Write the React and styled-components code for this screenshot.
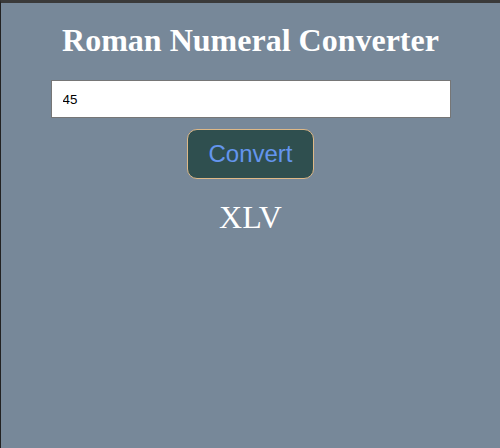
import React, { useState } from "react";
import styled, { createGlobalStyle } from "styled-components";

const Global = createGlobalStyle`
  html, body { margin: 0; padding: 0; background: #778899; }
  body { font-family: "Liberation Serif", "Times New Roman", serif; }
`;

const Page = styled.main`
  box-sizing: border-box;
  min-height: 448px;
  background: #778899;
  border-top: 3px solid #3a3a3a;
  border-left: 1px solid #222222;
  display: flex;
  flex-direction: column;
  align-items: center;
  padding: 0 48px;
`;

const Title = styled.h1`
  margin: 19px 0 21px;
  color: #ffffff;
  font-family: "Liberation Serif", "Times New Roman", serif;
  font-size: 32px;
  font-weight: bold;
`;

const Input = styled.input`
  box-sizing: border-box;
  width: 400px;
  height: 38px;
  padding: 0 11px;
  border: 1px solid #767676;
  background: #fff;
  color: #000;
  font-family: "Liberation Sans", Arial, sans-serif;
  font-size: 13.33px;
  outline: none;
`;

const Button = styled.button`
  margin-top: 11px;
  box-sizing: border-box;
  height: 50px;
  padding: 0 20px;
  border: 1px solid #deb887;
  border-radius: 10px;
  background: #2f4f4f;
  color: #6495ed;
  font-family: "Liberation Sans", Arial, sans-serif;
  font-size: 24px;
  cursor: pointer;
`;

const Result = styled.p`
  margin: 20px 0 0;
  color: #ffffff;
  font-family: "Liberation Serif", "Times New Roman", serif;
  font-size: 32px;
`;

function toRoman(n) {
  const map = [
    [1000, "M"], [900, "CM"], [500, "D"], [400, "CD"], [100, "C"], [90, "XC"],
    [50, "L"], [40, "XL"], [10, "X"], [9, "IX"], [5, "V"], [4, "IV"], [1, "I"],
  ];
  let out = "";
  let v = n;
  for (const [k, s] of map) {
    while (v >= k) { out += s; v -= k; }
  }
  return out;
}

export default function App() {
  const [value, setValue] = useState("45");
  const [result, setResult] = useState("XLV");
  return (
    <>
      <Global />
      <Page>
        <Title>Roman Numeral Converter</Title>
        <Input value={value} onChange={(e) => setValue(e.target.value)} />
        <Button onClick={() => setResult(toRoman(parseInt(value, 10) || 0))}>Convert</Button>
        <Result>{result}</Result>
      </Page>
    </>
  );
}
